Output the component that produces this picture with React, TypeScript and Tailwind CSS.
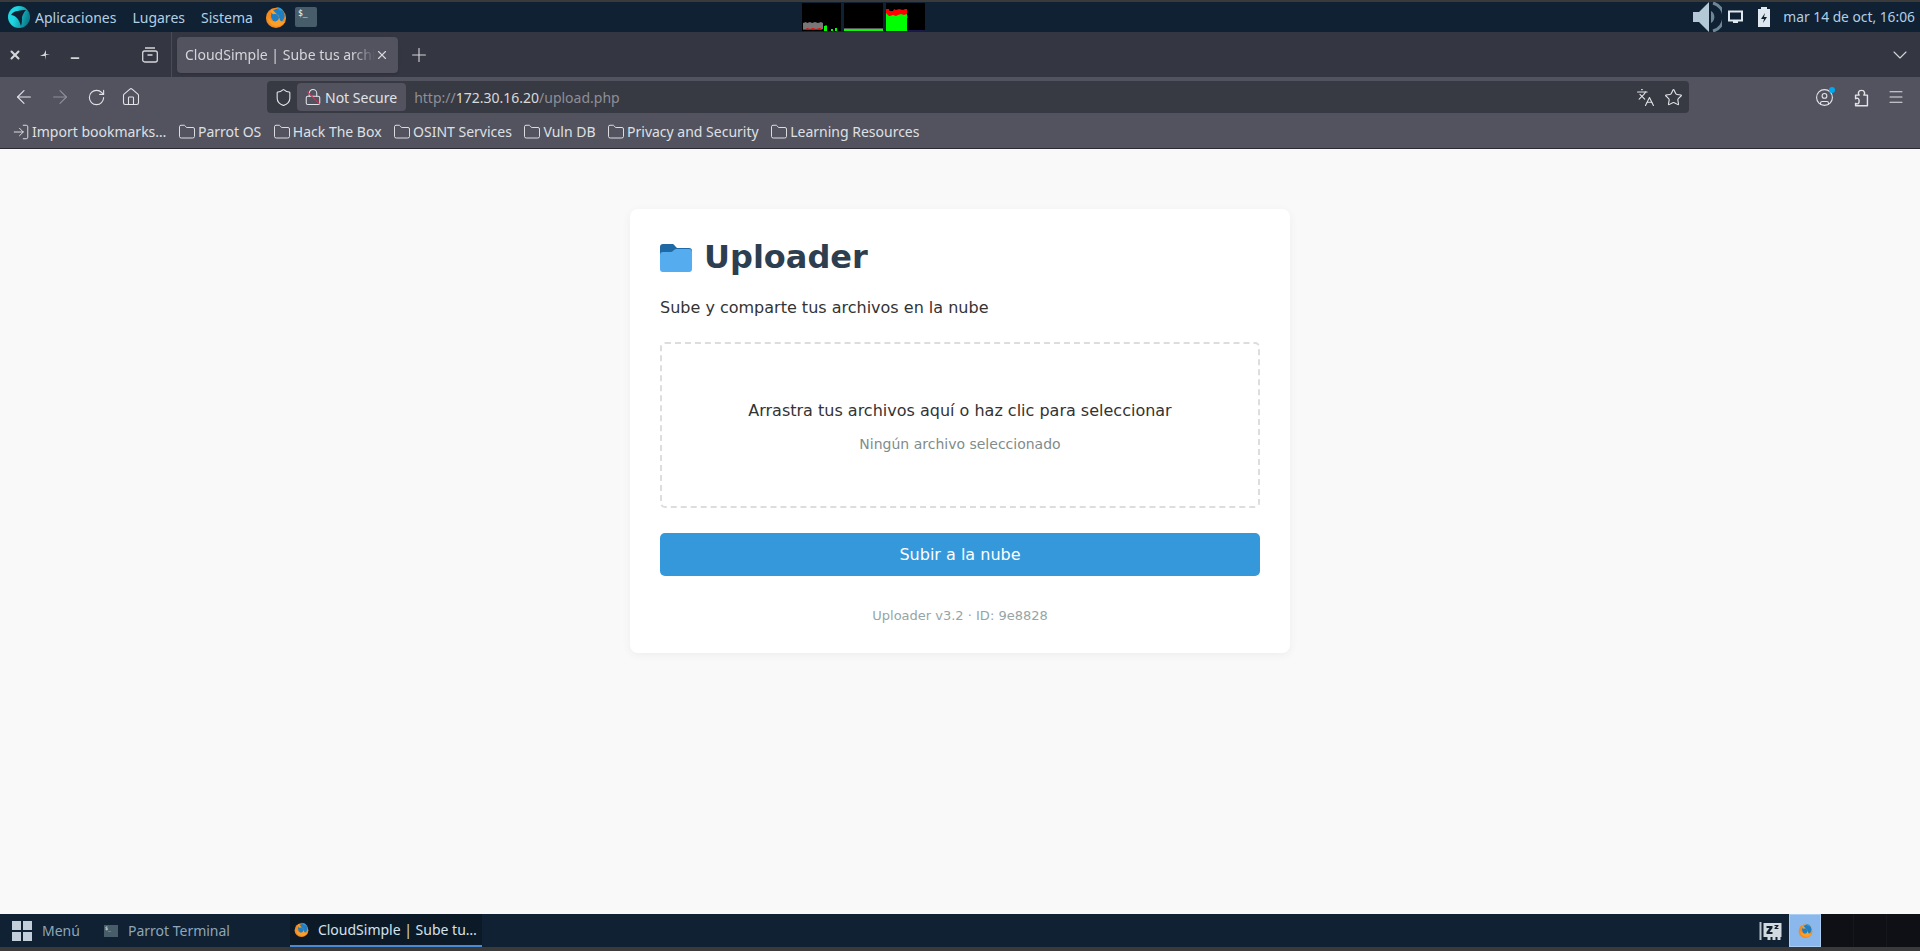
import React from 'react';
import { ArrowLeft, ArrowRight, RotateCw, Home, Shield, Lock, Languages, Star, Menu, Plus, X, ChevronDown, Folder, LogIn, CircleUser, Minus } from 'lucide-react';

const uiFont = 'font-["Noto_Sans",sans-serif]';
const pageFont = 'font-["DejaVu_Sans",sans-serif]';

const Firefox = ({ size = 20 }: { size?: number }) => (
    <svg width={size} height={size} viewBox="0 0 24 24">
        <circle cx="12" cy="13" r="11" fill="#f58a1f" />
        <circle cx="14" cy="10.500" r="7.500" fill="#1f7fc4" />
        <path d="M7 3c-1 3 0 5 2 6 3-1 5 0 6 2 1 3-1 6-5 6-3 0-5-2-6-5-1 5 3 10 9 10 4 0 7-2 9-5-3 1-6 0-6-3-2-5-5-7-9-11z" fill="#f9a02a" />
        <path d="M12 1c3 0 6 1 8 4l-4 0c-1-2-3-3-4-4z" fill="#2a9be0" />
    </svg>
);

const TerminalIcon = ({ large }: { large?: boolean }) => (
    <div className={large ? 'w-[22px] h-[20px] bg-[#485d6a] rounded-[2px] flex items-start pl-[3px] text-[8px] leading-[13px] text-white font-["DejaVu_Sans_Mono",monospace]' : 'w-[14px] h-[12px] bg-[#485d6a] flex items-start pl-[1px] text-[5px] leading-[6px] text-white font-["DejaVu_Sans_Mono",monospace]'}>
        $_
    </div>
);

const ParrotLogo = () => (
    <svg width="22" height="22" viewBox="0 0 22 22">
        <defs>
            <linearGradient id="parrot" x1="0" y1="0" x2="1" y2="0.300">
                <stop offset="0.400" stopColor="#1fd6e2" />
                <stop offset="1" stopColor="#0c7f8e" />
            </linearGradient>
        </defs>
        <circle cx="11" cy="11" r="11" fill="url(#parrot)" />
        <path d="M3 9c2-3 4-4 7-4 3-1 5-1 8-1-2 2-3 4-4 7 0 3 0 6-1 9-1-3-2-6-4-8-2-2-4-3-6-3z" fill="#0f2133" />
    </svg>
);

const Graph = ({ children }: { children: React.ReactNode }) => (
    <svg width="39" height="28" viewBox="0 0 39 28" className="bg-black">
        {children}
    </svg>
);

const TopPanel = () => (
    <div className={`${uiFont} h-[30px] bg-[#0f2133] flex items-center pl-2 pr-[5px] text-[14px] text-[#b4cfe3] shrink-0`}>
        <div className="w-[794px] flex items-center">
            <ParrotLogo />
            <span className="ml-[5px]">Aplicaciones</span>
            <span className="ml-4">Lugares</span>
            <span className="ml-4">Sistema</span>
            <div className="ml-3"><Firefox size={22} /></div>
            <div className="ml-2"><TerminalIcon large /></div>
        </div>
        <div className="flex gap-[3px] self-start pt-[1px]">
            <Graph>
                <path d="M1 20l3-1 1 1 3-1 2 1 3-1 3 1 3-1 2 1v6H1z" fill="#777" />
                <path d="M1 26h3l1-1 3 1 3-1 3 1 4-1 3 2H1z" fill="#f00" />
                <rect x="22" y="23" width="3" height="5" fill="#0f0" />
                <rect x="23" y="22" width="2" height="1" fill="#f00" />
                <rect x="29" y="26" width="2" height="2" fill="#0f0" />
                <rect x="33" y="25" width="2" height="3" fill="#0f0" />
            </Graph>
            <Graph>
                <rect x="0" y="25" width="39" height="1" fill="#555" />
                <rect x="0" y="26" width="39" height="2" fill="#0f0" />
            </Graph>
            <Graph>
                <rect x="0" y="10" width="21" height="18" fill="#0f0" />
                <path d="M0 6h3v2h4l1-2 2 1 3-1 4 1 2-1h2v5l1 4h-1v-4l-3 1-3-1-3 1-2 1-3-1-3 1H3l-3-3z" fill="#f00" />
                <rect x="21" y="27" width="18" height="1" fill="#1a1a4a" />
            </Graph>
        </div>
        <div className="flex-1 flex items-center justify-end">
            <svg width="29" height="30" viewBox="0 0 29 30">
                <path d="M0 10h6L16 0v30L6 20H0z" fill="#b4c9d6" />
                <path d="M18 9a7 7 0 0 1 0 12z" fill="#6d8795" />
                <path d="M20 1a14.500 14.500 0 0 1 0 28" fill="none" stroke="#6d8795" strokeWidth="3" />
            </svg>
            <svg width="15" height="14" viewBox="0 0 15 14" className="ml-[6px]">
                <path d="M1 1.500h13v9H1zM5 12h5" fill="none" stroke="#dfe8ee" strokeWidth="2" />
            </svg>
            <svg width="14" height="20" viewBox="0 0 14 20" className="ml-[14px]">
                <path d="M1 2h3V0h6v2h3v18H1z" fill="#dfe8ee" />
                <path d="M8 6 4 12h3l-1 4 4-6H7z" fill="#0f2133" />
            </svg>
            <span className="ml-[12px] text-[13.800px]">mar 14 de oct, 16:06</span>
        </div>
    </div>
);

const TabBar = () => (
    <div className={`${uiFont} h-[45px] bg-[#343741] flex items-center text-[#d5d6da] shrink-0`}>
        <div className="w-[172px] h-full flex items-center border-r border-[#4a4c56] pl-[8px]">
            <X className="w-[14px] h-[14px]" strokeWidth={3.5} />
            <svg width="10" height="10" viewBox="0 0 10 10" className="ml-[18px]">
                <path d="M6 0v4h4L6 5 5 10V6H0l4-2z" fill="#d5d6da" />
            </svg>
            <Minus className="w-[12px] h-[12px] ml-[19px] mt-[6px]" strokeWidth={3.5} />
            <svg width="16" height="16" viewBox="0 0 16 16" className="ml-[61px]" fill="none" stroke="currentColor" strokeWidth="1.300">
                <rect x="0.700" y="4" width="14.600" height="11" rx="2" />
                <path d="M3 1h10M5.500 8h5" />
            </svg>
        </div>
        <div className="w-[221px] h-[36px] ml-[5px] bg-[#52535f] rounded-[4px] flex items-center pl-2 pr-[9px] text-[14px] shadow-sm">
            <span className="flex-1 overflow-hidden whitespace-nowrap [mask-image:linear-gradient(to_right,black_88%,transparent)]">CloudSimple | Sube tus archivos</span>
            <X className="w-[14px] h-[14px] shrink-0" strokeWidth={2} />
        </div>
        <Plus className="w-[22px] h-[22px] ml-[10px]" strokeWidth={1.2} />
        <ChevronDown className="w-[24px] h-[24px] ml-auto mr-[8px]" strokeWidth={1.1} />
    </div>
);

const NavBar = () => (
    <div className={`${uiFont} h-[36px] bg-[#52535f] flex items-start pt-[4px] text-[#e2e3e7] shrink-0`}>
        <div className="w-[267px] flex items-center pl-[13px] h-[32px]">
            <ArrowLeft className="w-[22px] h-[22px]" strokeWidth={1.2} />
            <ArrowRight className="w-[22px] h-[22px] ml-[14px] text-[#8f9099]" strokeWidth={1.2} />
            <RotateCw className="w-[19px] h-[19px] ml-[15.500px]" strokeWidth={1.4} />
            <Home className="w-[20px] h-[20px] ml-[15.500px]" strokeWidth={1.3} />
        </div>
        <div className="w-[1422px] h-[32px] bg-[#383a43] rounded-[4px] flex items-center text-[14px]">
            <Shield className="w-[19px] h-[19px] ml-[6.500px]" strokeWidth={1.4} />
            <div className="ml-[4.500px] h-[28px] bg-[#52535f] rounded-[4px] flex items-center pl-[7px] pr-[9px]">
                <div className="relative">
                    <Lock className="w-[18px] h-[18px]" strokeWidth={1.4} />
                    <div className="absolute left-0 top-[8.500px] w-[18px] h-px bg-[#e22850] rotate-45" />
                </div>
                <span className="ml-[3px]">Not Secure</span>
            </div>
            <span className="ml-[8px] text-[#8e8f97]">http://<span className="text-[#d8d9dc]">172.30.16.20</span>/upload.php</span>
            <Languages className="w-[19px] h-[19px] ml-auto" strokeWidth={1.4} />
            <Star className="w-[19px] h-[19px] ml-[9px] mr-[6.500px]" strokeWidth={1.4} />
        </div>
        <div className="flex-1 flex items-center h-[32px] pl-[125.500px]">
            <div className="relative">
                <CircleUser className="w-[19px] h-[19px]" strokeWidth={1.4} />
                <div className="absolute right-[-1.500px] top-[-0.500px] w-[6px] h-[6px] rounded-full bg-[#00a8f0]" />
            </div>
            <svg width="19" height="19" viewBox="0 0 16 16" fill="none" stroke="currentColor" strokeWidth="1.200" strokeLinejoin="round" className="ml-[18px]">
                <path d="M3 15h10V6h-3c1-1 1-4-2-4S5 5 6 6H3v3c2-1 3 0 3 2s-1 3-3 2z" />
            </svg>
            <Menu className="w-[18px] h-[18px] ml-[16.500px]" strokeWidth={1.4} />
        </div>
    </div>
);

const bookmarks = ['Parrot OS', 'Hack The Box', 'OSINT Services', 'Vuln DB', 'Privacy and Security', 'Learning Resources'];

const BookmarkBar = () => (
    <div className={`${uiFont} h-[36px] bg-[#52535f] border-b border-[#2b2a33] flex items-center pl-[12px] pt-[2px] gap-[11.500px] text-[14px] text-[#dfe0e4] shrink-0`}>
        <div className="flex items-center gap-[2px]">
            <LogIn className="w-[18px] h-[18px]" strokeWidth={1.3} />
            <span>Import bookmarks…</span>
        </div>
        {bookmarks.map((name) => (
            <div key={name} className="flex items-center gap-[2px]">
                <Folder className="w-[18px] h-[18px]" strokeWidth={1.3} />
                <span>{name}</span>
            </div>
        ))}
    </div>
);

const UploadCard = () => (
    <div className={`${pageFont} w-[660px] bg-white rounded-[8px] shadow-[0_2px_10px_rgba(0,0,0,0.05)] p-[30px]`}>
        <div className="flex items-center gap-[12px] h-[37px] text-[32px] leading-[37px] font-bold text-[#2c3e50]">
            <svg width="32" height="28" viewBox="0 0 32 28">
                <path d="M3 0h9c1.500 0 2 .500 3 2l2 2h12c2 0 3 1 3 3v4H0V3c0-2 1-3 3-3z" fill="#1f6aa5" />
                <path d="M0 11c0-2 1-3 3-3h8c2 0 3-3 5-3h13c2 0 3 1 3 3v17c0 2-1 3-3 3H3c-2 0-3-1-3-3z" fill="#55acee" />
            </svg>
            <span>Uploader</span>
        </div>
        <p className="mt-[22px] text-[16px] leading-[19px] text-[#333]">Sube y comparte tus archivos en la nube</p>
        <div className="mt-[25px] h-[166px] pt-[3px] border-2 border-dashed border-[#dddddd] rounded-[5px] flex flex-col items-center justify-center">
            <p className="text-[16px] leading-[19px] text-[#333]">Arrastra tus archivos aquí o haz clic para seleccionar</p>
            <p className="mt-[16px] text-[14px] leading-[16px] text-[#7f8c8d]">Ningún archivo seleccionado</p>
        </div>
        <button className="mt-[25px] block w-full h-[43px] bg-[#3498db] rounded-[5px] text-white text-[16px]">Subir a la nube</button>
        <p className="mt-[32px] text-center text-[13px] leading-[15px] text-[#95a5a6]">Uploader v3.2 · ID: 9e8828</p>
    </div>
);

const TaskBar = () => (
    <div className={`${uiFont} h-[33px] bg-[#0f2133] flex items-center text-[14px] text-[#8fa6b8] shrink-0`}>
        <div className="grid grid-cols-2 gap-[2px] ml-[12px]">
            <div className="w-[9px] h-[9px] bg-[#c3cedb]" />
            <div className="w-[9px] h-[9px] bg-[#c3cedb]" />
            <div className="w-[9px] h-[9px] bg-[#c3cedb]" />
            <div className="w-[9px] h-[9px] bg-[#c3cedb]" />
        </div>
        <span className="ml-[10px]">Menú</span>
        <div className="ml-[24px]"><TerminalIcon /></div>
        <span className="ml-[10px] w-[162px]">Parrot Terminal</span>
        <div className="w-[192px] h-full bg-[#0c1a28] border-b-2 border-[#4a8ad4] flex items-center pl-[4px] text-[#d5e2ec]">
            <Firefox size={15} />
            <span className="ml-[9px]">CloudSimple | Sube tu…</span>
        </div>
        <div className="ml-auto flex items-center h-full">
            <svg width="23" height="22" viewBox="0 0 22 22">
                <path d="M0 2h2v18H0z" fill="#b8c2ca" />
                <path d="M4 3h18v14h-1v3h-3v-3h-2v3h-3v-3h-2v3H8v-3H4z" fill="#d2dae0" />
                <path d="M7 6h6v2l-3 4h3v2H7v-2l3-4H7zM15 5h4v1l-2 2h2v1h-4V8l2-2h-2z" fill="#10202e" />
            </svg>
            <div className="ml-[7px] w-[32px] h-full bg-[#8ab8ec] border border-[#a9cdf3] flex items-center justify-center">
                <Firefox size={15} />
            </div>
            <div className="w-[33px] h-full bg-[#0f1015] border-r border-[#16171c]" />
            <div className="w-[33px] h-full bg-[#0f1015] border-r border-[#16171c]" />
            <div className="w-[33px] h-full bg-[#0f1015]" />
        </div>
    </div>
);

export default function App() {
    return (
        <div className="h-screen flex flex-col bg-[#3a3a3a] overflow-hidden">
            <div className="h-[2px] shrink-0" />
            <TopPanel />
            <TabBar />
            <NavBar />
            <BookmarkBar />
            <main className="flex-1 bg-[#f9f9f9] flex justify-center items-start pt-[60px]">
                <UploadCard />
            </main>
            <TaskBar />
            <div className="h-[4px] shrink-0" />
        </div>
    );
}
